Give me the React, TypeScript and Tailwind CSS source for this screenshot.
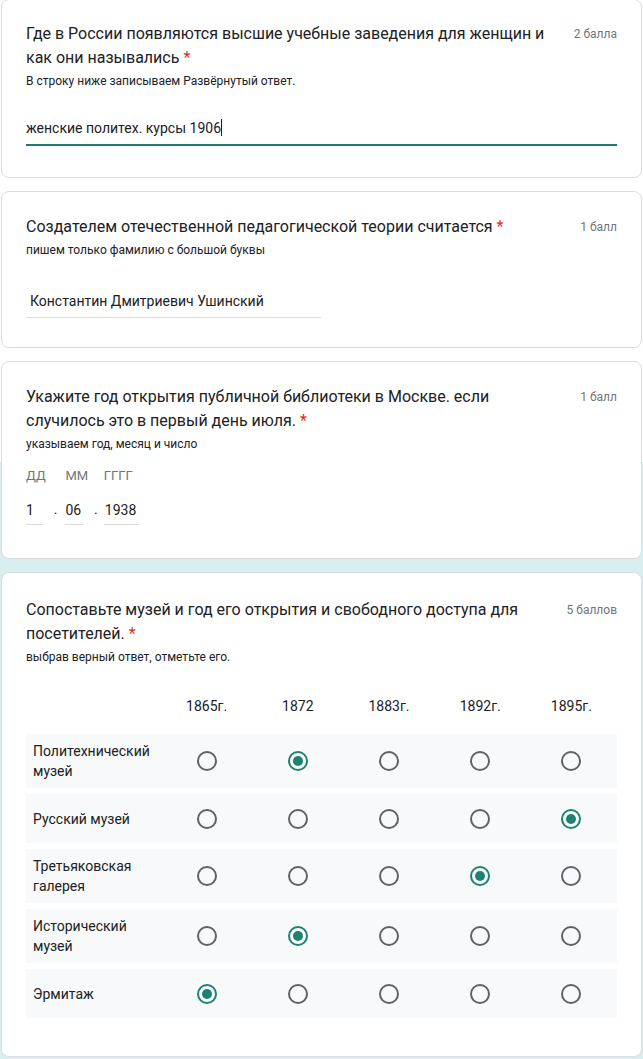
import { ReactNode } from "react";

const font = { fontFamily: "Roboto, 'Liberation Sans', sans-serif" };

function Card({ children, className = "" }: { children: ReactNode; className?: string }) {
  return (
    <div className={`bg-white border border-[#dadce0] rounded-lg mx-px px-[24px] ${className}`}>
      {children}
    </div>
  );
}

function Header({ title, points, desc }: { title: string; points: string; desc: string }) {
  return (
    <div>
      <div className="flex items-start justify-between gap-3">
        <div className="text-[16px] leading-[24px] text-[#202124]">
          {title}
          <span className="text-[#d93025] ml-1">*</span>
        </div>
        <div className="text-[12px] leading-[24px] text-[#70757a] shrink-0 whitespace-nowrap">{points}</div>
      </div>
      <div className="text-[12px] leading-[18px] text-[#202124] mt-[2px]">{desc}</div>
    </div>
  );
}

function Radio({ checked }: { checked: boolean }) {
  return (
    <div
      className={`w-[20px] h-[20px] rounded-full border-2 flex items-center justify-center ${
        checked ? "border-[#1e8271]" : "border-[#5f6368]"
      }`}
    >
      {checked && <div className="w-[10px] h-[10px] rounded-full bg-[#1e8271]" />}
    </div>
  );
}

const years = ["1865г.", "1872", "1883г.", "1892г.", "1895г."];
const rows = [
  { label: "Политехнический музей", pick: 1 },
  { label: "Русский музей", pick: 4 },
  { label: "Третьяковская галерея", pick: 3 },
  { label: "Исторический музей", pick: 1 },
  { label: "Эрмитаж", pick: 0 },
];

export default function App() {
  return (
    <div
      className="min-h-[1059px] w-[643px] bg-[linear-gradient(to_bottom,#ffffff_462px,#d9eeee_462px)] flex flex-col gap-[13px] pb-[4px]"
      style={font}
    >
      {/* Q1 */}
      <Card className="pt-[22px] pb-[31px] -mt-px">
        <Header
          title="Где в России появляются высшие учебные заведения для женщин и как они назывались"
          points="2 балла"
          desc="В строку ниже записываем Развёрнутый ответ."
        />
        <div className="mt-[26px] border-b-2 border-[#1e7b78] pb-[4px]">
          <span className="text-[14px] leading-[20px] text-[#202124]">женские политех. курсы 1906</span>
          <span className="inline-block w-px h-[17px] bg-[#202124] align-middle -mt-[2px]" />
        </div>
      </Card>

      {/* Q2 */}
      <Card className="pt-[23px] pb-[29px]">
        <Header
          title="Создателем отечественной педагогической теории считается"
          points="1 балл"
          desc="пишем только фамилию с большой буквы"
        />
        <div className="mt-[30px] w-[295px] border-b border-[#dadce0] pb-[4px] pl-[4px]">
          <span className="text-[14px] leading-[20px] text-[#202124]">Константин Дмитриевич Ушинский</span>
        </div>
      </Card>

      {/* Q3 */}
      <Card className="pt-[23px] pb-[33px]">
        <Header
          title="Укажите год открытия публичной библиотеки в Москве. если случилось это в первый день июля."
          points="1 балл"
          desc="указываем год, месяц и число"
        />
        <div className="mt-[14px] flex items-end text-[#202124]">
          <div className="flex flex-col">
            <span className="text-[13px] leading-[18px] text-[#70757a]">ДД</span>
            <span className="mt-[15px] text-[14px] leading-[20px] w-[17px] border-b border-[#dadce0] pb-[4px]">1</span>
          </div>
          <span className="text-[14px] mx-[8px] pb-[5px]">.</span>
          <div className="flex flex-col">
            <span className="text-[13px] leading-[18px] text-[#70757a]">ММ</span>
            <span className="mt-[15px] text-[14px] leading-[20px] w-[19px] border-b border-[#dadce0] pb-[4px]">06</span>
          </div>
          <span className="text-[14px] mx-[6px] pb-[5px]">.</span>
          <div className="flex flex-col">
            <span className="text-[13px] leading-[18px] text-[#70757a]">ГГГГ</span>
            <span className="mt-[15px] text-[14px] leading-[20px] w-[35px] border-b border-[#dadce0] pb-[4px] pl-px">1938</span>
          </div>
        </div>
      </Card>

      {/* Q4 */}
      <Card className="pt-[25px] pb-[38px]">
        <Header
          title="Сопоставьте музей и год его открытия и свободного доступа для посетителей."
          points="5 баллов"
          desc="выбрав верный ответ, отметьте его."
        />
        <div className="mt-[30px] grid grid-cols-[135px_repeat(5,1fr)] text-[14px] leading-[20px] text-[#202124]">
          <div />
          {years.map((y) => (
            <div key={y} className="text-center">{y}</div>
          ))}
        </div>
        <div className="mt-[18px] flex flex-col gap-[6px]">
          {rows.map((r) => (
            <div
              key={r.label}
              className="grid grid-cols-[135px_repeat(5,1fr)] items-center bg-[#f8f9fa] min-h-[49px] py-[7px]"
            >
              <div className="pl-[7px] pr-2 text-[14px] leading-[20px] text-[#202124]">{r.label}</div>
              {years.map((y, i) => (
                <div key={y} className="flex justify-center">
                  <Radio checked={i === r.pick} />
                </div>
              ))}
            </div>
          ))}
        </div>
      </Card>
    </div>
  );
}
